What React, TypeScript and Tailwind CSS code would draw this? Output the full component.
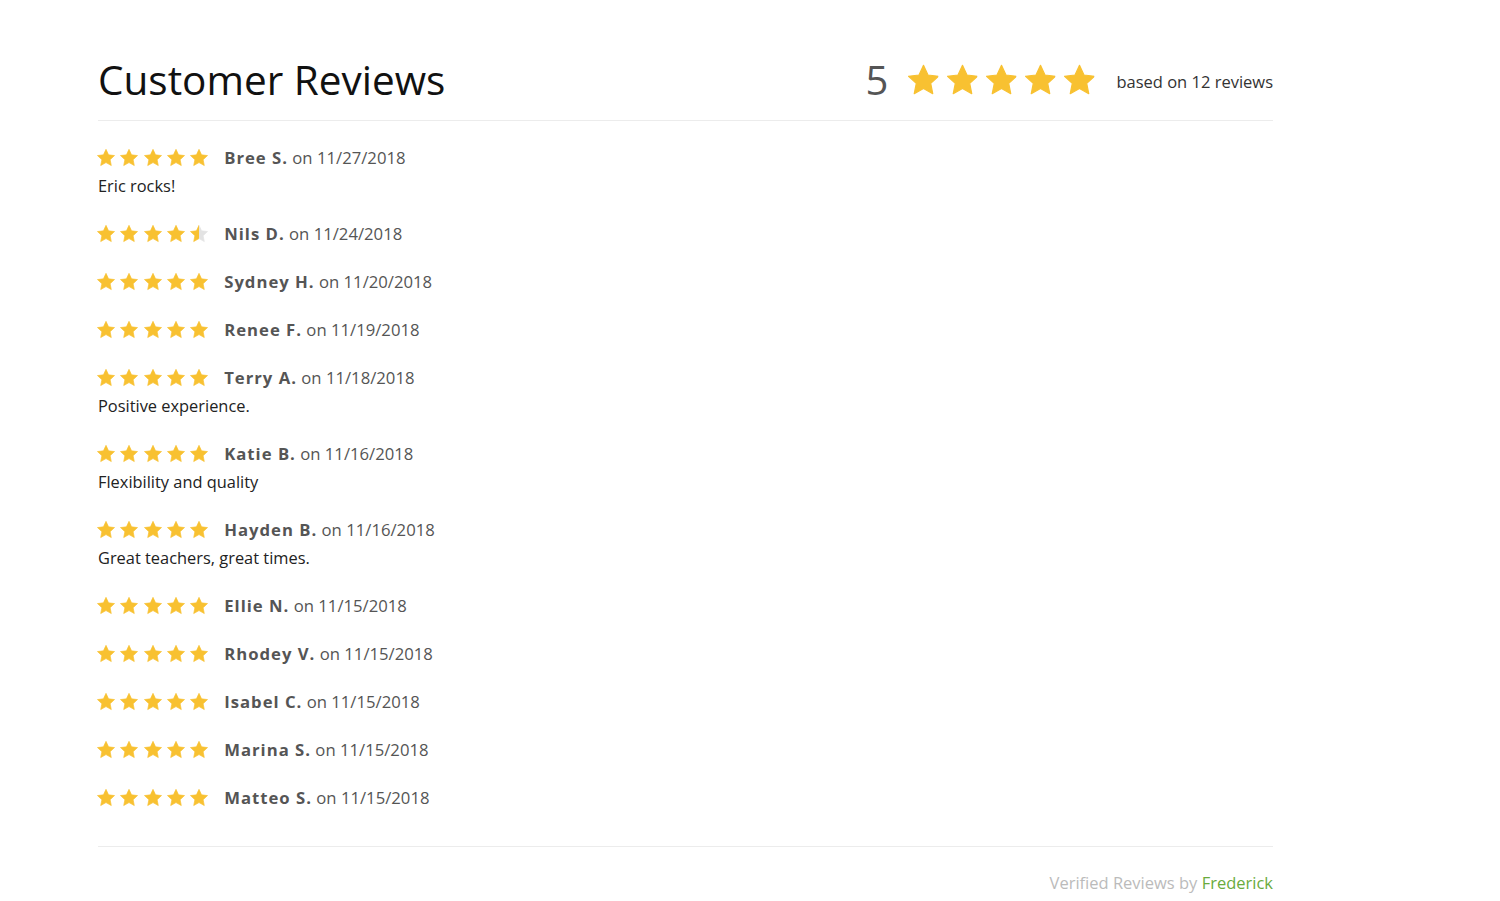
import { useId } from 'react'

const reviews = [
  { name: 'Bree S.', date: '11/27/2018', rating: 5, text: 'Eric rocks!' },
  { name: 'Nils D.', date: '11/24/2018', rating: 4.5 },
  { name: 'Sydney H.', date: '11/20/2018', rating: 5 },
  { name: 'Renee F.', date: '11/19/2018', rating: 5 },
  { name: 'Terry A.', date: '11/18/2018', rating: 5, text: 'Positive experience.' },
  { name: 'Katie B.', date: '11/16/2018', rating: 5, text: 'Flexibility and quality' },
  { name: 'Hayden B.', date: '11/16/2018', rating: 5, text: 'Great teachers, great times.' },
  { name: 'Ellie N.', date: '11/15/2018', rating: 5 },
  { name: 'Rhodey V.', date: '11/15/2018', rating: 5 },
  { name: 'Isabel C.', date: '11/15/2018', rating: 5 },
  { name: 'Marina S.', date: '11/15/2018', rating: 5 },
  { name: 'Matteo S.', date: '11/15/2018', rating: 5 },
]

const STAR =
  'M12 1.6l3.09 6.6 7.16.86-5.3 4.92 1.4 7.08L12 17.5l-6.35 3.56 1.4-7.08-5.3-4.92 7.16-.86z'

function Star({ size, fill = 1 }: { size: number; fill?: number }) {
  const id = useId()
  return (
    <svg width={size} height={size} viewBox="0 0 24 24">
      <defs>
        <linearGradient id={id}>
          <stop offset={fill} stopColor="#f8c131" />
          <stop offset={fill} stopColor="#e3e3e3" />
        </linearGradient>
      </defs>
      <path d={STAR} fill={`url(#${id})`} stroke={`url(#${id})`} strokeWidth="0.8" strokeLinejoin="round" />
    </svg>
  )
}

function Stars({ rating, size, gap }: { rating: number; size: number; gap: string }) {
  return (
    <div className={`flex items-center ${gap}`}>
      {[0, 1, 2, 3, 4].map((i) => (
        <Star key={i} size={size} fill={Math.max(0, Math.min(1, rating - i))} />
      ))}
    </div>
  )
}

export default function App() {
  return (
    <div className="min-h-screen bg-white font-['Open_Sans',sans-serif]">
      <div className="ml-[98px] w-[1175px] pt-[52px]">
        <div className="flex items-center justify-between border-b border-[#ececec] pb-[12px]">
          <h1 className="text-[40.5px] leading-[56px] text-[#111]">Customer Reviews</h1>
          <div className="flex items-center">
            <span className="mr-[18px] text-[40px] leading-[56px] text-[#555]">5</span>
            <Stars rating={5} size={35} gap="gap-[4px]" />
            <span className="ml-[19px] pt-[4px] text-[16.5px] text-[#333]">based on 12 reviews</span>
          </div>
        </div>

        <div className="flex flex-col gap-[20px] pt-[23px] pb-[34px]">
          {reviews.map((r) => (
            <div key={r.name}>
              <div className="flex h-[28px] items-center">
                <div className="-ml-[2px]">
                  <Stars rating={r.rating} size={20} gap="gap-[3.3px]" />
                </div>
                <span className="ml-[15px] text-[16.7px] text-[#555]">
                  <span className="font-bold tracking-[1px]">{r.name}</span> on {r.date}
                </span>
              </div>
              {r.text && <p className="h-[28px] text-[16.4px] leading-[28px] text-[#222]">{r.text}</p>}
            </div>
          ))}
        </div>

        <div className="border-t border-[#ececec] pt-[24px] text-right text-[16.5px] text-[#bbb]">
          Verified Reviews by <span className="text-[#6aab3d]">Frederick</span>
        </div>
      </div>
    </div>
  )
}
